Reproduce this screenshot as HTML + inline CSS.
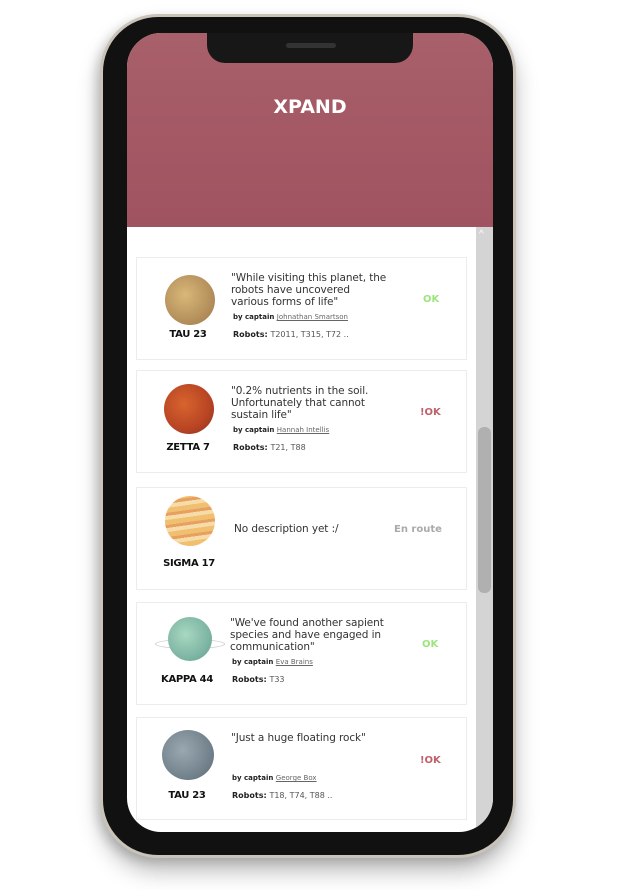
<!DOCTYPE html>
<html><head><meta charset="utf-8"><style>
*{margin:0;padding:0;box-sizing:border-box}
body{width:624px;height:890px;background:#fff;position:relative;overflow:hidden;font-family:"Liberation Sans",sans-serif}
.a{position:absolute}
.phone{left:100px;top:14px;width:416px;height:844px;border-radius:58px;background:#111;border:3px solid #c9c3b8;box-shadow:0 14px 22px rgba(0,0,0,.25),-4px 4px 10px rgba(0,0,0,.15)}
.screen{left:127px;top:33px;width:366px;height:799px;border-radius:34px;background:#fff;overflow:hidden}
.hdr{left:0;top:0;width:366px;height:194px;background:linear-gradient(#a8606a,#a05260)}
.notch{left:207px;top:33px;width:206px;height:30px;background:#171717;border-radius:0 0 18px 18px}
.spk{left:286px;top:43px;width:50px;height:5px;background:#333;border-radius:3px}
.card{left:136px;width:331px;height:103px;border:1px solid #ececec;background:#fff}
.t{line-height:12.2px;color:#333;font-family:"DejaVu Sans","Liberation Sans",sans-serif;font-size:10.5px;letter-spacing:-.1px}
.by{font-size:7px;color:#222;font-weight:bold;font-family:"DejaVu Sans",sans-serif}
.by span{font-weight:normal;color:#666;text-decoration:underline}
.rb{font-size:8px;color:#222;font-weight:bold;font-family:"DejaVu Sans",sans-serif}
.rb span{font-weight:normal;color:#555}
.nm{font-size:10px;font-weight:bold;color:#111;width:80px;text-align:center;font-family:"DejaVu Sans",sans-serif;letter-spacing:-.3px}
.ok{font-size:10px;font-weight:bold;color:#9be57d;font-family:"DejaVu Sans",sans-serif}
.nok{font-size:10px;font-weight:bold;color:#c0606a;font-family:"DejaVu Sans",sans-serif}
.pl{width:50px;height:50px;border-radius:50%}
</style></head><body>
<div class="a phone"></div>
<div class="a screen">
 <div class="a hdr"></div>
 <div class="a" style="left:0;top:63px;width:366px;text-align:center;color:#fff;font-weight:bold;font-size:19px;font-family:'DejaVu Sans',sans-serif">XPAND</div>
 <div class="a" style="left:349px;top:194px;width:17px;height:605px;background:#d4d4d4"></div>
 <div class="a" style="left:351px;top:394px;width:13px;height:166px;background:#b0b0b0;border-radius:6px"></div>
 <div class="a" style="left:352px;top:196px;color:#fff;font-size:10px">^</div>
</div>
<div class="a notch"></div><div class="a spk"></div>

<div class="a card" style="top:257px"></div>
<div class="a pl" style="left:165px;top:275px;background:radial-gradient(circle at 40% 40%,#d8b878,#b08a58 70%,#9a7850)"></div>
<div class="a nm" style="left:148px;top:329px">TAU 23</div>
<div class="a t" style="left:231px;top:272px">"While visiting this planet, the<br>robots have uncovered<br>various forms of life"</div>
<div class="a by" style="left:233px;top:313px">by captain <span>Johnathan Smartson</span></div>
<div class="a rb" style="left:233px;top:330px">Robots: <span>T2011, T315, T72 ..</span></div>
<div class="a ok" style="left:423px;top:294px">OK</div>

<div class="a card" style="top:370px"></div>
<div class="a pl" style="left:164px;top:384px;background:radial-gradient(circle at 40% 40%,#d8642e,#b84424 60%,#8a3020)"></div>
<div class="a nm" style="left:148px;top:442px">ZETTA 7</div>
<div class="a t" style="left:231px;top:385px">"0.2% nutrients in the soil.<br>Unfortunately that cannot<br>sustain life"</div>
<div class="a by" style="left:233px;top:426px">by captain <span>Hannah Intellis</span></div>
<div class="a rb" style="left:233px;top:443px">Robots: <span>T21, T88</span></div>
<div class="a nok" style="left:420px;top:407px">!OK</div>

<div class="a card" style="top:487px"></div>
<div class="a pl" style="left:165px;top:496px;background:repeating-linear-gradient(172deg,#f0c070 0 5px,#e8a060 5px 8px,#f6dca8 8px 12px)"></div>
<div class="a nm" style="left:149px;top:558px">SIGMA 17</div>
<div class="a t" style="left:234px;top:523px">No description yet :/</div>
<div class="a" style="left:394px;top:524px;font-size:10px;font-weight:bold;color:#aaa;font-family:'DejaVu Sans',sans-serif">En route</div>

<div class="a card" style="top:602px"></div>
<div class="a" style="left:155px;top:639px;width:70px;height:10px;border:1px solid #ccc;border-radius:50%"></div>
<div class="a pl" style="left:168px;top:617px;width:44px;height:44px;background:radial-gradient(circle at 40% 40%,#a8d8c0,#78b0a0 70%,#6a9c90)"></div>
<div class="a nm" style="left:147px;top:674px">KAPPA 44</div>
<div class="a t" style="left:230px;top:617px">"We've found another sapient<br>species and have engaged in<br>communication"</div>
<div class="a by" style="left:232px;top:658px">by captain <span>Eva Brains</span></div>
<div class="a rb" style="left:232px;top:675px">Robots: <span>T33</span></div>
<div class="a ok" style="left:422px;top:639px">OK</div>

<div class="a card" style="top:717px"></div>
<div class="a pl" style="left:162px;top:730px;width:52px;height:50px;background:radial-gradient(circle at 40% 40%,#9aa8b0,#6e7e88 70%,#4e5c66)"></div>
<div class="a nm" style="left:147px;top:790px">TAU 23</div>
<div class="a t" style="left:231px;top:732px">"Just a huge floating rock"</div>
<div class="a by" style="left:232px;top:774px">by captain <span>George Box</span></div>
<div class="a rb" style="left:232px;top:791px">Robots: <span>T18, T74, T88 ..</span></div>
<div class="a nok" style="left:420px;top:755px">!OK</div>
</body></html>
